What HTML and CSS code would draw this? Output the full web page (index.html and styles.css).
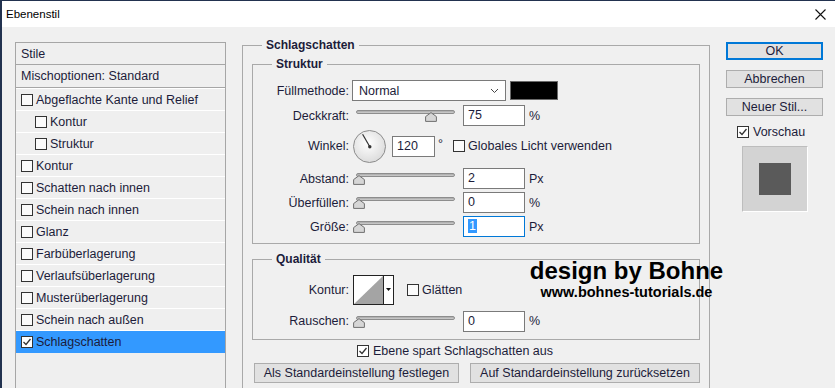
FILE: index.html
```html
<!DOCTYPE html>
<html lang="de">
<head>
<meta charset="utf-8">
<title>Ebenenstil</title>
<link rel="stylesheet" href="styles.css">
</head>
<body>
<div class="window">
  <div class="titlebar">
    <span class="title">Ebenenstil</span>
    <svg class="close" width="11" height="11" viewBox="0 0 11 11"><path d="M0.5 0.5 L10.5 10.5 M10.5 0.5 L0.5 10.5" stroke="#111" stroke-width="1.1" fill="none"/></svg>
  </div>
  <div class="main">
    <div class="styles-list">
      <div class="row head">Stile</div>
      <div class="row head second">Mischoptionen: Standard</div>
      <div class="row"><span class="cb"></span>Abgeflachte Kante und Relief</div>
      <div class="row sub"><span class="cb"></span>Kontur</div>
      <div class="row sub"><span class="cb"></span>Struktur</div>
      <div class="row"><span class="cb"></span>Kontur</div>
      <div class="row"><span class="cb"></span>Schatten nach innen</div>
      <div class="row"><span class="cb"></span>Schein nach innen</div>
      <div class="row"><span class="cb"></span>Glanz</div>
      <div class="row"><span class="cb"></span>Farbüberlagerung</div>
      <div class="row"><span class="cb"></span>Verlaufsüberlagerung</div>
      <div class="row"><span class="cb"></span>Musterüberlagerung</div>
      <div class="row"><span class="cb"></span>Schein nach außen</div>
      <div class="row selected"><span class="cb checked"><svg width="10" height="10" viewBox="0 0 10 10"><path d="M1.5 5 L4 7.5 L8.5 2" stroke="#333" stroke-width="1.3" fill="none"/></svg></span>Schlagschatten</div>
    </div>

    <fieldset class="group outer">
      <legend>Schlagschatten</legend>
      <fieldset class="group inner struktur">
        <legend>Struktur</legend>
        <div class="frow r-fill">
          <span class="lbl">Füllmethode:</span>
          <div class="select"><span>Normal</span><svg width="9" height="6" viewBox="0 0 9 6"><polyline points="1,1 4.5,4.5 8,1" fill="none" stroke="#444" stroke-width="1"/></svg></div>
          <span class="swatch"></span>
        </div>
        <div class="frow r-opacity">
          <span class="lbl">Deckkraft:</span>
          <div class="slider"><span class="track"></span><svg class="thumb" style="left:72px" width="12" height="10" viewBox="0 0 12 10"><path d="M6 0.6 L11.4 4.6 V9.4 H0.6 V4.6 Z" fill="#d6d6d6" stroke="#6f6f6f"/></svg></div>
          <span class="num">75</span><span class="unit">%</span>
        </div>
        <div class="frow r-angle">
          <span class="lbl">Winkel:</span>
          <svg class="dial" width="34" height="34" viewBox="0 0 34 34"><defs><radialGradient id="dg" cx="45%" cy="40%" r="65%"><stop offset="0" stop-color="#ffffff"/><stop offset="1" stop-color="#d9d9d9"/></radialGradient></defs><circle cx="16.5" cy="17.5" r="16" fill="url(#dg)" stroke="#8c8c8c"/><line x1="16.8" y1="17.8" x2="9.6" y2="5.2" stroke="#333" stroke-width="1.2"/><circle cx="16.8" cy="17.8" r="1.7" fill="#333"/></svg>
          <span class="num angle">120</span><span class="deg">°</span>
          <span class="cb global"></span><span class="cbtext">Globales Licht verwenden</span>
        </div>
        <div class="frow r-dist">
          <span class="lbl">Abstand:</span>
          <div class="slider"><span class="track"></span><svg class="thumb" style="left:0px" width="12" height="10" viewBox="0 0 12 10"><path d="M6 0.6 L11.4 4.6 V9.4 H0.6 V4.6 Z" fill="#d6d6d6" stroke="#6f6f6f"/></svg></div>
          <span class="num">2</span><span class="unit">Px</span>
        </div>
        <div class="frow r-spread">
          <span class="lbl">Überfüllen:</span>
          <div class="slider"><span class="track"></span><svg class="thumb" style="left:0px" width="12" height="10" viewBox="0 0 12 10"><path d="M6 0.6 L11.4 4.6 V9.4 H0.6 V4.6 Z" fill="#d6d6d6" stroke="#6f6f6f"/></svg></div>
          <span class="num">0</span><span class="unit">%</span>
        </div>
        <div class="frow r-size">
          <span class="lbl">Größe:</span>
          <div class="slider"><span class="track"></span><svg class="thumb" style="left:0px" width="12" height="10" viewBox="0 0 12 10"><path d="M6 0.6 L11.4 4.6 V9.4 H0.6 V4.6 Z" fill="#d6d6d6" stroke="#6f6f6f"/></svg></div>
          <span class="num focus"><span class="sel">1</span></span><span class="unit">Px</span>
        </div>
      </fieldset>

      <fieldset class="group inner quality">
        <legend>Qualität</legend>
        <div class="frow r-contour">
          <span class="lbl">Kontur:</span>
          <svg class="contour" width="41" height="30" viewBox="0 0 41 30"><rect x="0.5" y="0.5" width="40" height="29" fill="#fff" stroke="#222"/><path d="M1 29 L30 1 V29 Z" fill="#a4a4a4"/><line x1="30.5" y1="1" x2="30.5" y2="29" stroke="#222"/><path d="M33 13 h5 l-2.5 3 z" fill="#111"/></svg>
          <span class="cb smooth"></span><span class="cbtext">Glätten</span>
        </div>
        <div class="frow r-noise">
          <span class="lbl">Rauschen:</span>
          <div class="slider"><span class="track"></span><svg class="thumb" style="left:0px" width="12" height="10" viewBox="0 0 12 10"><path d="M6 0.6 L11.4 4.6 V9.4 H0.6 V4.6 Z" fill="#d6d6d6" stroke="#6f6f6f"/></svg></div>
          <span class="num">0</span><span class="unit">%</span>
        </div>
      </fieldset>

      <div class="knockout"><span class="cb checked"><svg width="10" height="10" viewBox="0 0 10 10"><path d="M1.5 5 L4 7.5 L8.5 2" stroke="#333" stroke-width="1.3" fill="none"/></svg></span><span class="cbtext">Ebene spart Schlagschatten aus</span></div>
      <div class="defaults">
        <button class="btn b-set">Als Standardeinstellung festlegen</button>
        <button class="btn b-reset">Auf Standardeinstellung zurücksetzen</button>
      </div>
    </fieldset>

    <div class="side">
      <button class="btn sbtn ok">OK</button>
      <button class="btn sbtn">Abbrechen</button>
      <button class="btn sbtn">Neuer Stil...</button>
      <div class="preview-toggle"><span class="cb checked"><svg width="10" height="10" viewBox="0 0 10 10"><path d="M1.5 5 L4 7.5 L8.5 2" stroke="#333" stroke-width="1.3" fill="none"/></svg></span><span class="cbtext">Vorschau</span></div>
      <div class="preview"><span class="preview-square"></span></div>
    </div>
  </div>

  <div class="watermark">
    <div class="wm-big">design by Bohne</div>
    <div class="wm-small">www.bohnes-tutorials.de</div>
  </div>
</div>
</body>
</html>
```

FILE: styles.css
```css
* { box-sizing: border-box; }

html, body {
  margin: 0;
  padding: 0;
}

body {
  width: 835px;
  height: 388px;
  overflow: hidden;
  background: #f0f0f0;
  font-family: "Liberation Sans", Arial, sans-serif;
  font-size: 12.5px;
  color: #1c1c3a;
}

.window {
  position: relative;
  height: 388px;
  border-left: 2px solid #22324f;
  border-top: 1px solid #22324f;
  overflow: hidden;
}

.titlebar {
  height: 26px;
  background: #ffffff;
  display: flex;
  align-items: center;
  justify-content: space-between;
  padding: 0 9px 0 4px;
}

.title {
  font-size: 11.5px;
  color: #000;
}

.main {
  display: flex;
  align-items: flex-start;
  padding: 15px 0 0 13px;
}

/* ---------- style list ---------- */
.styles-list {
  flex: none;
  width: 211px;
  height: 360px;
  border: 1px solid #a6a6a6;
  background: #efefef;
}

.row {
  height: 22px;
  display: flex;
  align-items: center;
  gap: 3px;
  padding-left: 5px;
  border-bottom: 1px solid #ffffff;
  white-space: nowrap;
}

.row.head {
  border-bottom-color: #a6a6a6;
}

.row.second {
  height: 23px;
  margin-bottom: 1px;
  box-shadow: 0 1px 0 #ffffff;
}

.row.sub {
  padding-left: 19px;
}

.row.selected {
  background: #3399ff;
  border-bottom-color: #3399ff;
}

.cb {
  flex: none;
  display: inline-flex;
  align-items: center;
  justify-content: center;
  width: 12px;
  height: 12px;
  border: 1px solid #333;
  background: #fbfbfb;
}

.cb.checked {
  background: #ffffff;
}

/* ---------- group boxes ---------- */
.group {
  margin: 0;
  min-width: 0;
  border: 1px solid #a9a9a9;
}

.group > legend {
  font-weight: bold;
  font-size: 12px;
  line-height: 14px;
  padding: 0 4px;
  color: #1c1c3a;
}

.outer {
  flex: none;
  width: 468px;
  height: 400px;
  margin: -4px 0 0 16px;
  padding: 5px 9px 0 9px;
}

.outer > legend {
  margin-left: 10px;
}

.inner {
  width: 448px;
  padding: 0;
}

.inner > legend {
  margin-left: 19px;
}

.struktur {
  padding: 9px 0 6px 0;
}

.quality {
  margin-top: 8px;
  padding: 9px 0 8px 0;
}

.frow {
  display: flex;
  align-items: center;
  height: 21px;
}

.lbl {
  flex: none;
  width: 96px;
  margin-right: 4px;
  text-align: right;
  white-space: nowrap;
}

.r-opacity { margin-top: 4px; }
.r-angle { margin-top: 3px; height: 34px; }
.r-dist { margin-top: 5px; }
.r-spread { margin-top: 3px; }
.r-size { margin-top: 3px; }
.r-contour { height: 30px; }
.r-noise { margin-top: 6px; height: 20px; }

.select {
  flex: none;
  width: 154px;
  height: 21px;
  margin-left: -1px;
  display: flex;
  align-items: center;
  justify-content: space-between;
  padding: 0 6px;
  background: #fff;
  border: 1px solid #7a7a7a;
}

.swatch {
  flex: none;
  width: 48px;
  height: 19px;
  margin-left: 4px;
  background: #000;
  border: 1px solid #6a6a6a;
}

.slider {
  position: relative;
  flex: none;
  width: 105px;
  height: 21px;
  padding: 5px 3px 0 3px;
}

.track {
  display: block;
  height: 4px;
  border-radius: 2px;
  background: linear-gradient(#a8a8a8, #cfcfcf);
  border: 1px solid #8d8d8d;
}

.thumb {
  position: absolute;
  top: 7px;
}

.num {
  flex: none;
  width: 62px;
  height: 21px;
  margin-left: 5px;
  padding-left: 4px;
  line-height: 19px;
  background: #fff;
  border: 1px solid #7a7a7a;
}

.num.focus {
  border-color: #0078d7;
}

.sel {
  background: #3399ff;
  color: #fff;
  padding: 0 1px;
}

.unit {
  margin-left: 4px;
}

.dial {
  flex: none;
}

.num.angle {
  width: 43px;
  margin-left: 5px;
}

.deg {
  margin-left: 3px;
  margin-top: -4px;
}

.cb.global {
  margin-left: 10px;
}

.cbtext {
  margin-left: 3px;
  white-space: nowrap;
}

.contour {
  flex: none;
}

.cb.smooth {
  margin-left: 13px;
}

.knockout {
  display: flex;
  align-items: center;
  height: 21px;
  padding-left: 105px;
}

.knockout .cbtext {
  margin-left: 4px;
}

.defaults {
  display: flex;
  gap: 11px;
  margin-top: 2px;
  padding-left: 2px;
}

.btn {
  font-family: "Liberation Sans", Arial, sans-serif;
  font-size: 12.5px;
  color: #1c1c3a;
  background: #e1e1e1;
  border: 1px solid #adadad;
  padding: 0;
  margin: 0;
}

.b-set {
  width: 205px;
  height: 20px;
}

.b-reset {
  width: 230px;
  height: 20px;
}

/* ---------- right side ---------- */
.side {
  flex: none;
  width: 97px;
  margin-left: 16px;
  display: flex;
  flex-direction: column;
}

.sbtn {
  height: 18px;
  line-height: 16px;
  margin-top: 10px;
}

.sbtn.ok {
  margin-top: 0;
  border: 2px solid #0078d7;
  line-height: 14px;
}

.preview-toggle {
  display: flex;
  align-items: center;
  height: 18px;
  margin-top: 7px;
  padding-left: 11px;
}

.preview-toggle .cbtext {
  margin-left: 4px;
}

.preview {
  width: 66px;
  height: 66px;
  margin: 5px 0 0 16px;
  display: flex;
  align-items: center;
  justify-content: center;
  background: #d3d3d3;
  border: 1px solid #bdbdbd;
  border-right-color: #ffffff;
  border-bottom-color: #ffffff;
}

.preview-square {
  width: 32px;
  height: 32px;
  background: #5a5a5a;
}

/* ---------- watermark overlay ---------- */
.watermark {
  position: absolute;
  left: 510px;
  top: 257px;
  width: 229px;
  text-align: center;
  font-family: "Liberation Sans", Arial, sans-serif;
  font-weight: bold;
  color: #000;
  white-space: nowrap;
}

.wm-big {
  font-size: 24px;
  line-height: 26px;
}

.wm-small {
  font-size: 14.5px;
  line-height: 17px;
}
```
